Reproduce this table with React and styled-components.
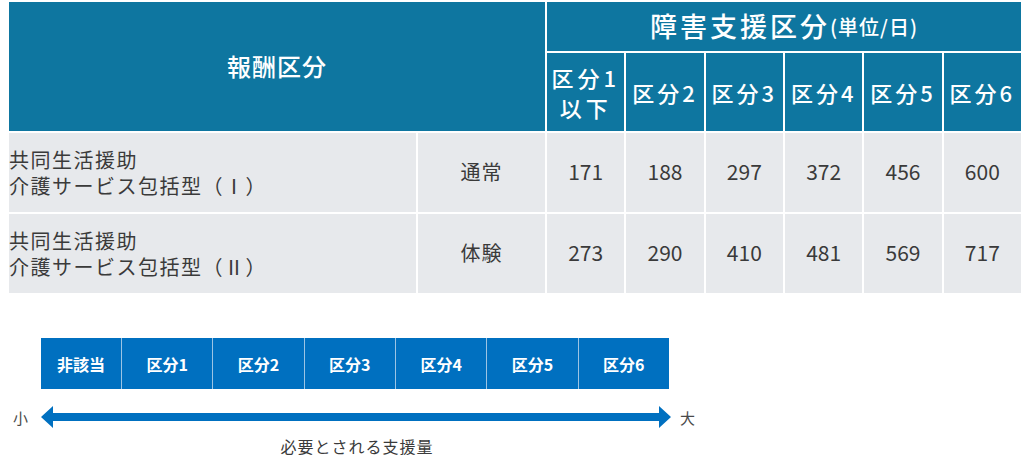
import React from "react";
import styled, { createGlobalStyle } from "styled-components";

const Global = createGlobalStyle`
  html, body { margin: 0; padding: 0; background: #ffffff; }
  body { font-family: "Noto Sans CJK JP", "Noto Sans", sans-serif; }
`;

const Page = styled.div`
  width: 1024px;
  height: 457px;
  padding: 2px 0 0 9px;
  box-sizing: border-box;
  overflow: hidden;
`;

const Table = styled.div`
  display: grid;
  width: 1012px;
  grid-template-columns: 407px 127px repeat(6, 1fr);
  grid-template-rows: 49px 78px 79px 79px;
  gap: 2px;
  background: #ffffff;
`;

const HeadCell = styled.div`
  background: #0e76a0;
  color: #ffffff;
  display: flex;
  align-items: center;
  justify-content: center;
  text-align: center;
  font-weight: 500;
  font-size: ${(p) => p.$size || 22}px;
  letter-spacing: ${(p) => p.$spacing ?? 3}px;
  line-height: ${(p) => p.$lh || "1.2"};
  grid-column: ${(p) => p.$col || "auto"};
  grid-row: ${(p) => p.$row || "auto"};
`;

const Small = styled.span`
  font-size: 20px;
  letter-spacing: 1px;
`;

const BodyCell = styled.div`
  background: #e7e9ec;
  color: #3a3a3a;
  display: flex;
  align-items: center;
  justify-content: ${(p) => (p.$left ? "flex-start" : "center")};
  text-align: ${(p) => (p.$left ? "left" : "center")};
  font-size: ${(p) => p.$size || 20}px;
  letter-spacing: ${(p) => p.$spacing ?? 0}px;
  line-height: 26px;
  font-weight: 400;
  padding-bottom: ${(p) => p.$lift || 0}px;
`;

const Scale = styled.div`
  margin: 45px 0 0 32px;
  width: 660px;
`;

const Steps = styled.div`
  display: flex;
  width: 628px;
  height: 51px;
`;

const Step = styled.div`
  width: ${(p) => p.$w}px;
  background: #0070c0;
  color: #ffffff;
  font-weight: 700;
  font-size: 16px;
  display: flex;
  align-items: center;
  justify-content: center;
  border-left: ${(p) => (p.$first ? "none" : "1px solid #9cc4e4")};
  box-sizing: border-box;
`;

const ArrowRow = styled.div`
  display: flex;
  align-items: center;
  margin: 16px 0 0 -28px;
  height: 24px;
`;

const End = styled.span`
  font-size: 15px;
  color: #4a4a4a;
  width: ${(p) => p.$w}px;
  text-align: ${(p) => p.$align};
`;

const Caption = styled.div`
  margin: 6px 0 0 0;
  width: 632px;
  text-align: center;
  font-size: 16px;
  line-height: 22px;
  letter-spacing: 1px;
  color: #3a3a3a;
`;

const rows = [
  { kind: "通常", roman: "Ⅰ", vals: [171, 188, 297, 372, 456, 600] },
  { kind: "体験", roman: "Ⅱ", vals: [273, 290, 410, 481, 569, 717] },
];

const steps = ["非該当", "区分1", "区分2", "区分3", "区分4", "区分5", "区分6"];

export default function App() {
  return (
    <Page>
      <Global />
      <Table>
        <HeadCell $col="1 / 3" $row="1 / 3" $size={24} $spacing={1}>
          報酬区分
        </HeadCell>
        <HeadCell $col="3 / 9" $size={27} $spacing={3}>
          障害支援区分<Small>(単位/日)</Small>
        </HeadCell>
        <HeadCell $size={22} $spacing={4} $lh="30px">
          区分1
          <br />
          以下
        </HeadCell>
        {[2, 3, 4, 5, 6].map((n) => (
          <HeadCell key={n} $size={22} $spacing={3}>
            区分{n}
          </HeadCell>
        ))}
        {rows.map((r) => (
          <React.Fragment key={r.kind}>
            <BodyCell $left $spacing={1.5}>
              共同生活援助
              <br />
              介護サービス包括型（{r.roman}）
            </BodyCell>
            <BodyCell $spacing={1} $lift={2}>
              {r.kind}
            </BodyCell>
            {r.vals.map((v) => (
              <BodyCell key={v} $size={21} $lift={4}>
                {v}
              </BodyCell>
            ))}
          </React.Fragment>
        ))}
      </Table>
      <Scale>
        <Steps>
          {steps.map((s, i) => (
            <Step key={s} $w={i === 0 ? 80 : 91.33} $first={i === 0}>
              {s}
            </Step>
          ))}
        </Steps>
        <ArrowRow>
          <End $w={28} $align="left">
            小
          </End>
          <svg width="630" height="24" viewBox="0 0 630 24">
            <polygon
              points="0,12 12,1 12,8 618,8 618,1 630,12 618,23 618,16 12,16 12,23"
              fill="#0070c0"
            />
          </svg>
          <End $w={24} $align="right">
            大
          </End>
        </ArrowRow>
        <Caption>必要とされる支援量</Caption>
      </Scale>
    </Page>
  );
}
